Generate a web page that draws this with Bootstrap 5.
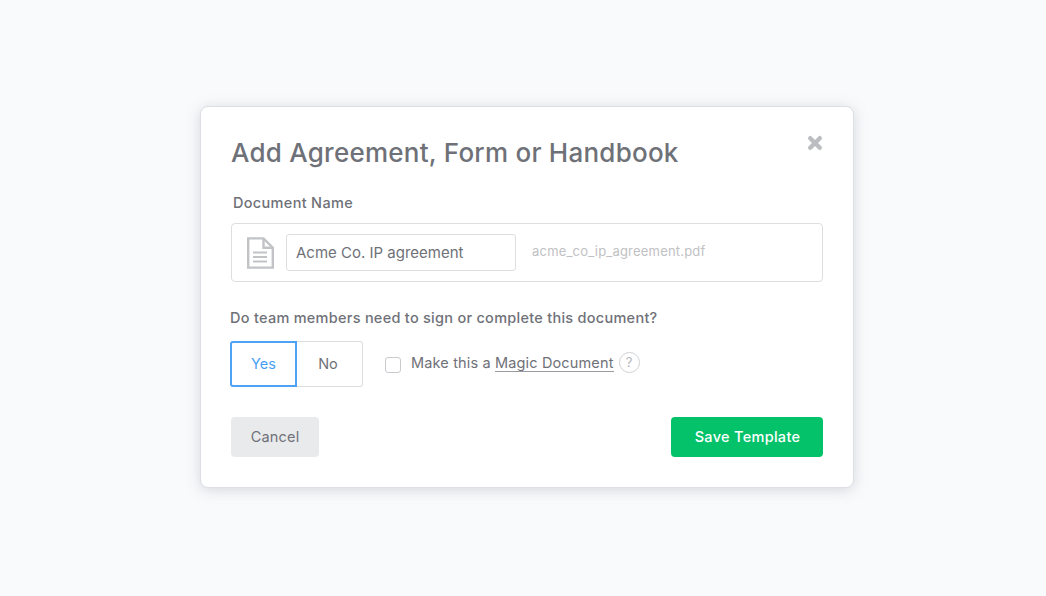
<!DOCTYPE html>
<html lang="en">
<head>
<meta charset="utf-8">
<title>Add Agreement</title>
<link href="https://cdn.jsdelivr.net/npm/bootstrap@5.3.0/dist/css/bootstrap.min.css" rel="stylesheet">
<style>
html,body{height:100%;margin:0}
body{background:#f9fafc;font-family:Inter,Lato,"Liberation Sans",sans-serif;color:#6f7178;overflow:hidden}
.stage{height:596px;padding:0 0 2px 8px}
.dialog{width:654px;height:382px;background:#fff;border:1px solid #dcdfe3;border-radius:8px;box-shadow:0 2px 14px rgba(110,120,130,.26);padding:18px 30px 0 30px;position:relative}
.dlg-title{font-size:26px;font-weight:500;line-height:56px;margin:0;color:#6f7178;letter-spacing:.24px}
.dlg-close{position:absolute;right:30px;top:28px;width:16px;height:16px;padding:0;border:0;background:none;display:block}
.dlg-close svg{display:block}
.name-label{font-size:14.5px;font-weight:500;line-height:20px;margin:12px 0 10px 2px;color:#6f7178;letter-spacing:.32px;display:block}
.doc-box{height:59px;border:1px solid #dcdee1;border-radius:4px;padding-left:14px}
.doc-input{width:230px;height:37px;border:1px solid #dcdee1;border-radius:3px;padding:0 9px;font-size:15px;color:#6f7178;font-family:inherit;letter-spacing:0;margin-left:12px;outline:0}
.file-name{font-size:13px;color:#bfc1c4;margin-left:16px;letter-spacing:.2px;position:relative;top:-1px}
.question{font-size:14.5px;font-weight:500;line-height:20px;margin:26px 0 13px -1px;color:#6f7178;letter-spacing:.27px}
.yn{height:46px;margin-left:-1px}
.yn-btn{height:46px;background:#fff;font-size:14.5px;padding:0;font-family:inherit;color:#6f7178;border:1px solid #dcdee1;border-radius:0 3px 3px 0;border-left:0}
.yn-btn.on{color:#4a9ff5;border:2px solid #4fa3f7;border-radius:3px 0 0 3px;width:67px}
.yn-btn.off{width:66px;padding-right:3px;padding-bottom:1px}
.magic-check{width:16px;height:16px;border:1px solid #c9cbcf;border-radius:3px;margin:1px 10px 0 22px;background:#fff;flex:none}
.magic-text{font-size:14.5px;letter-spacing:.15px;color:#6f7178;margin-bottom:2px}
.magic-link{color:#6f7178;text-decoration:none;border-bottom:1px solid #9a9ca1}
.help-dot{width:21px;height:21px;border:1px solid #cfd1d4;border-radius:50%;color:#b4b6ba;font-size:13px;line-height:19px;text-align:center;margin-left:5px;margin-bottom:4px}
.actions{margin-top:30px}
.act-cancel,.act-save{height:40px;border:0;border-radius:4px;font-size:14.5px;font-family:inherit;padding:0}
.act-cancel{width:88px;background:#e9eaec;color:#6f7178;letter-spacing:.2px}
.act-save{width:152px;background:#04c26a;color:#fff;font-weight:500;letter-spacing:.3px;padding-left:1px}
</style>
</head>
<body>
<div class="stage d-flex justify-content-center align-items-center">
  <div class="dialog">
    <button class="dlg-close" type="button" aria-label="Close">
      <svg width="16" height="16" viewBox="0 0 16 16"><path d="M3.2 3.2 12.8 12.8M12.8 3.2 3.2 12.8" stroke="#bcbdc0" stroke-width="4.4" stroke-linecap="round" fill="none"/></svg>
    </button>
    <h1 class="dlg-title">Add Agreement, Form or Handbook</h1>
    <label class="name-label" for="docname">Document Name</label>
    <div class="doc-box d-flex align-items-center">
      <svg width="28" height="32" viewBox="0 0 28 32" fill="none" stroke="#c2c3c6" stroke-width="2.4"><path d="M2.2 1.4H17.5L26.8 10.7V30.6H2.2Z"/><path d="M17.5 1.4V10.7H26.8"/><path d="M7 15.5H21M7 20H21M7 24.5H21" stroke-width="2"/></svg>
      <input id="docname" class="doc-input" type="text" value="Acme Co. IP agreement">
      <span class="file-name">acme_co_ip_agreement.pdf</span>
    </div>
    <p class="question">Do team members need to sign or complete this document?</p>
    <div class="yn d-flex align-items-center">
      <button class="yn-btn on" type="button">Yes</button>
      <button class="yn-btn off" type="button">No</button>
      <span class="magic-check"></span>
      <span class="magic-text">Make this a <a class="magic-link" href="#">Magic Document</a></span>
      <span class="help-dot">?</span>
    </div>
    <div class="actions d-flex justify-content-between">
      <button class="act-cancel" type="button">Cancel</button>
      <button class="act-save" type="button">Save Template</button>
    </div>
  </div>
</div>
<script src="https://cdn.jsdelivr.net/npm/bootstrap@5.3.0/dist/js/bootstrap.bundle.min.js"></script>
</body>
</html>
